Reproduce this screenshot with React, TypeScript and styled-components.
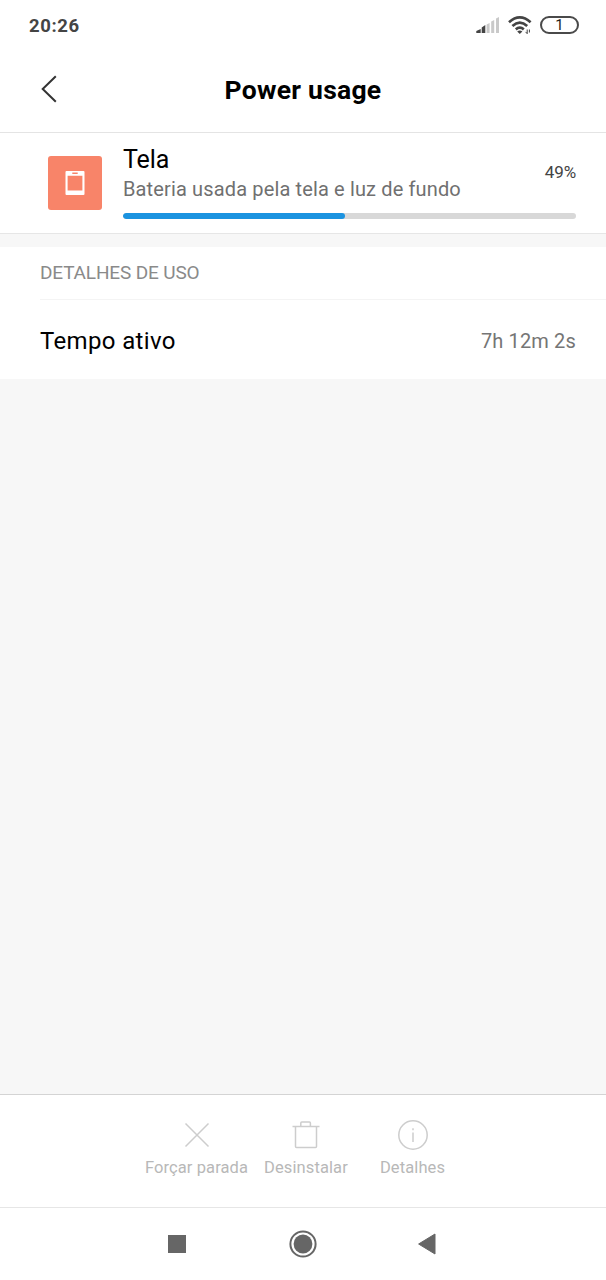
import React from 'react';
import styled, { createGlobalStyle } from 'styled-components';

const GlobalStyle = createGlobalStyle`
  * { box-sizing: border-box; }
  body { margin: 0; background: #fff; font-family: Roboto, "Liberation Sans", sans-serif; }
  svg { display: block; }
`;

const Screen = styled.div`
  display: flex;
  flex-direction: column;
  width: 606px;
  height: 1280px;
  background: #f7f7f7;
`;

const StatusBar = styled.header`
  display: flex;
  align-items: center;
  justify-content: space-between;
  height: 50px;
  padding: 0 27px 0 29px;
  background: #fff;
`;

const Clock = styled.span`
  padding-top: 2px;
  font-size: 18.5px;
  font-weight: 700;
  line-height: 24px;
  letter-spacing: 0.6px;
  color: #444;
`;

const StatusIcons = styled.div`
  display: flex;
  align-items: center;
  gap: 8px;
`;

const Battery = styled.div`
  display: flex;
  align-items: center;
  justify-content: center;
  width: 39px;
  height: 18px;
  border: 2px solid #4a4a4a;
  border-radius: 9px;
  font-size: 15px;
  font-weight: 400;
  line-height: 14px;
  color: #222;
`;

const TitleBar = styled.div`
  display: grid;
  grid-template-columns: 80px 1fr 80px;
  align-items: center;
  height: 83px;
  padding-bottom: 3px;
  border-bottom: 1px solid #e4e4e4;
  background: #fff;
`;

const BackButton = styled.button`
  display: flex;
  height: 48px;
  align-items: center;
  padding: 0 0 1px 40px;
  border: 0;
  background: none;
`;

const Title = styled.h1`
  margin: 0;
  font-size: 26.5px;
  font-weight: 700;
  line-height: 32px;
  letter-spacing: 0.25px;
  text-align: center;
  color: #000;
`;

const UsageCard = styled.section`
  display: flex;
  height: 101px;
  padding: 0 30px 0 48px;
  border-bottom: 1px solid #e6e6e6;
  background: #fff;
`;

const AppTile = styled.div`
  display: flex;
  align-items: center;
  justify-content: center;
  width: 54px;
  height: 54px;
  margin: 23px 21px 0 0;
  border-radius: 3px;
  background: #f88469;
`;

const UsageBody = styled.div`
  flex: 1;
  padding-top: 12px;
`;

const UsageInfo = styled.div`
  display: flex;
  justify-content: space-between;
  height: 68px;
`;

const AppName = styled.div`
  font-size: 25px;
  line-height: 30px;
  letter-spacing: -0.1px;
  color: #000;
`;

const AppSummary = styled.div`
  font-size: 20px;
  line-height: 28px;
  letter-spacing: 0.14px;
  color: #707070;
`;

const Percent = styled.span`
  margin-top: 15px;
  font-size: 17px;
  line-height: 24px;
  letter-spacing: -0.1px;
  color: #444;
`;

const Track = styled.div`
  height: 6px;
  border-radius: 3px;
  overflow: hidden;
  background: #d8d8d8;
`;

const Fill = styled.div<{ $percent: number }>`
  width: ${(p) => p.$percent}%;
  height: 100%;
  border-radius: 3px;
  background: #1b93e0;
`;

const Details = styled.section`
  margin-top: 13px;
  height: 132px;
  background: #fff;
`;

const SectionHeading = styled.h2`
  margin: 0 0 0 40px;
  height: 53px;
  border-bottom: 1px solid #f4f4f4;
  font-size: 19px;
  font-weight: 400;
  line-height: 51px;
  letter-spacing: -0.15px;
  color: #8a8a8a;
`;

const DetailRow = styled.div`
  display: flex;
  align-items: center;
  justify-content: space-between;
  height: 79px;
  padding: 2px 30px 0 40px;
`;

const DetailLabel = styled.span`
  font-size: 24px;
  line-height: 32px;
  letter-spacing: 0.35px;
  color: #000;
`;

const DetailValue = styled.span`
  font-size: 20px;
  line-height: 32px;
  letter-spacing: 0.15px;
  color: #757575;
`;

const ActionBar = styled.footer`
  display: grid;
  grid-template-columns: 108px 111px 102px;
  height: 113px;
  margin-top: auto;
  padding: 24px 0 0 142.5px;
  border-top: 1px solid #d4d4d4;
  background: #fff;
`;

const Action = styled.button`
  display: flex;
  flex-direction: column;
  align-items: center;
  gap: 5px;
  padding: 0;
  border: 0;
  background: none;
  font-family: inherit;
  font-size: 16.5px;
  line-height: 24px;
  letter-spacing: 0.1px;
  white-space: nowrap;
  color: #b8b8b8;
`;

const NavBar = styled.nav`
  display: flex;
  align-items: center;
  justify-content: space-between;
  height: 73px;
  padding: 0 170px 1px 168px;
  border-top: 1px solid #e6e6e6;
  background: #fff;
`;

const HomeIcon = styled.svg`
  margin-left: 2px;
`;

const SignalIcon = () => (
  <svg width="24" height="18" viewBox="0 0 24 18">
    <path d="M0.3 17v-2L4.7 13v4z M5.7 17v-5.5L9.3 9V17z" fill="#444" />
    <path d="M10.6 17V8.6L13.6 7v10z M15.2 17V5.5L18.2 4v13z M20 17V2.5L23 1v16z" fill="#c9c9c9" />
  </svg>
);

const WifiIcon = () => (
  <svg width="24" height="20" viewBox="0 0 24 20" fill="none" stroke="#444" strokeWidth="2.7">
    <path d="M1 7.2Q11.8-2.4 22.6 7.2" />
    <path d="M4.4 11Q11.8 4.4 19.2 11" />
    <path d="M7.8 14.4Q11.8 11 15.8 14.4" />
    <path d="M9.2 16.4Q11.8 14.6 14.4 16.4L11.8 19z" fill="#444" stroke="none" />
    <path d="M19.2 14.5v4.2l-1.6-1.8M21.4 14.5v3" strokeWidth="1" />
  </svg>
);

const ACTIONS = [
  {
    label: 'Forçar parada',
    icon: <path d="M4.5 4.5l23 23M27.5 4.5l-23 23" />,
  },
  {
    label: 'Desinstalar',
    icon: <path d="M2.5 7.5h27M5.5 7.5v20a1 1 0 0 0 1 1h19a1 1 0 0 0 1-1v-20M10.8 7.5v-3.5a1 1 0 0 1 1-1h7.6a1 1 0 0 1 1 1v3.5" />,
  },
  {
    label: 'Detalhes',
    icon: (
      <>
        <circle cx="16" cy="16" r="14.2" />
        <path d="M16 13.5v9.5M16 9.3v2" />
      </>
    ),
  },
];

export default function App() {
  return (
    <Screen>
      <GlobalStyle />
      <StatusBar>
        <Clock>20:26</Clock>
        <StatusIcons>
          <SignalIcon />
          <WifiIcon />
          <Battery>1</Battery>
        </StatusIcons>
      </StatusBar>
      <TitleBar>
        <BackButton aria-label="Voltar">
          <svg width="18" height="28" viewBox="0 0 18 28" fill="none" stroke="#333" strokeWidth="2">
            <path d="M15.8 1.2L2.7 14l13.1 12.8" />
          </svg>
        </BackButton>
        <Title>Power usage</Title>
      </TitleBar>
      <UsageCard>
        <AppTile>
          <svg width="20" height="26" viewBox="0 0 20 26">
            <path fillRule="evenodd" fill="#fff" d="M1.5 1h17a1 1 0 0 1 1 1v22a1 1 0 0 1-1 1h-17a1 1 0 0 1-1-1V2a1 1 0 0 1 1-1zM2.6 5.8v14.8h14.8V5.8zM7.3 2.5v1.6h5.4V2.5z" />
          </svg>
        </AppTile>
        <UsageBody>
          <UsageInfo>
            <div>
              <AppName>Tela</AppName>
              <AppSummary>Bateria usada pela tela e luz de fundo</AppSummary>
            </div>
            <Percent>49%</Percent>
          </UsageInfo>
          <Track>
            <Fill $percent={49} />
          </Track>
        </UsageBody>
      </UsageCard>
      <Details>
        <SectionHeading>DETALHES DE USO</SectionHeading>
        <DetailRow>
          <DetailLabel>Tempo ativo</DetailLabel>
          <DetailValue>7h 12m 2s</DetailValue>
        </DetailRow>
      </Details>
      <ActionBar>
        {ACTIONS.map((action) => (
          <Action key={action.label}>
            <svg width="32" height="32" viewBox="0 0 32 32" fill="none" stroke="#cdcdcd" strokeWidth="1.5">
              {action.icon}
            </svg>
            {action.label}
          </Action>
        ))}
      </ActionBar>
      <NavBar>
        <svg width="18" height="18" viewBox="0 0 18 18">
          <rect width="18" height="18" fill="#666" />
        </svg>
        <HomeIcon width="28" height="28" viewBox="0 0 28 28">
          <circle cx="14" cy="14" r="12.6" fill="none" stroke="#666" strokeWidth="2" />
          <circle cx="14" cy="14" r="9.4" fill="#666" />
        </HomeIcon>
        <svg width="18" height="22" viewBox="0 0 18 22">
          <path d="M17 1v20L0.6 11z" fill="#666" stroke="#666" strokeWidth="1" strokeLinejoin="round" />
        </svg>
      </NavBar>
    </Screen>
  );
}
